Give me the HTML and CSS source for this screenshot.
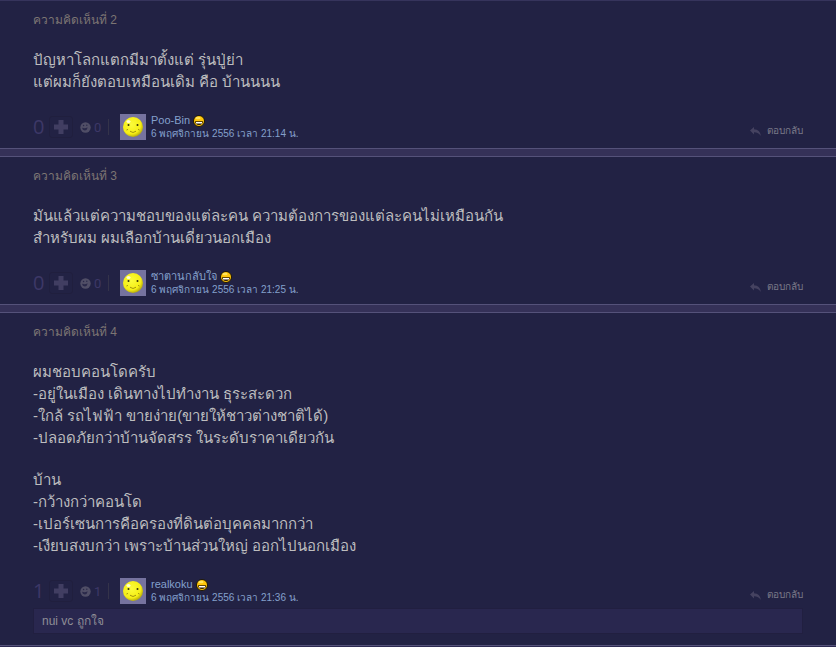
FILE: index.html
```html
<!DOCTYPE html>
<html lang="th">
<head>
    <meta charset="UTF-8">
    <meta name="viewport" content="width=device-width, initial-scale=1.0">
    <title>ความคิดเห็น</title>
    <link rel="stylesheet" href="styles.css">
</head>
<body>

    <!-- Comment list -->
    <main class="comments">
        <article class="comment">
            <h2 class="comment-no">ความคิดเห็นที่ 2</h2>
            <div class="comment-body">
                <p>ปัญหาโลกแตกมีมาตั้งแต่ รุ่นปู่ย่า<br>แต่ผมก็ยังตอบเหมือนเดิม คือ บ้านนนน</p>
            </div>
            <footer class="comment-footer">
                <span class="score">0</span>
                <button class="vote" type="button" aria-label="ถูกใจ"><svg><use href="#icon-plus"/></svg></button>
                <button class="emotion" type="button"><svg><use href="#icon-emotion"/></svg>0</button>
                <a class="avatar" href="#" aria-label="Poo-Bin"><svg><use href="#icon-face"/></svg></a>
                <div class="author">
                    <a class="name" href="#">Poo-Bin <svg><use href="#icon-grin"/></svg></a>
                    <time datetime="2013-11-06T21:14">6 พฤศจิกายน 2556 เวลา 21:14 น.</time>
                </div>
                <a class="reply" href="#"><svg><use href="#icon-reply"/></svg>ตอบกลับ</a>
            </footer>
        </article>

        <article class="comment">
            <h2 class="comment-no">ความคิดเห็นที่ 3</h2>
            <div class="comment-body">
                <p>มันแล้วแต่ความชอบของแต่ละคน ความต้องการของแต่ละคนไม่เหมือนกัน<br>สำหรับผม ผมเลือกบ้านเดี่ยวนอกเมือง</p>
            </div>
            <footer class="comment-footer">
                <span class="score">0</span>
                <button class="vote" type="button" aria-label="ถูกใจ"><svg><use href="#icon-plus"/></svg></button>
                <button class="emotion" type="button"><svg><use href="#icon-emotion"/></svg>0</button>
                <a class="avatar" href="#" aria-label="ซาตานกลับใจ"><svg><use href="#icon-face"/></svg></a>
                <div class="author">
                    <a class="name" href="#">ซาตานกลับใจ <svg><use href="#icon-grin"/></svg></a>
                    <time datetime="2013-11-06T21:25">6 พฤศจิกายน 2556 เวลา 21:25 น.</time>
                </div>
                <a class="reply" href="#"><svg><use href="#icon-reply"/></svg>ตอบกลับ</a>
            </footer>
        </article>

        <article class="comment">
            <h2 class="comment-no">ความคิดเห็นที่ 4</h2>
            <div class="comment-body">
                <p>ผมชอบคอนโดครับ<br>-อยู่ในเมือง เดินทางไปทำงาน ธุระสะดวก<br>-ใกล้ รถไฟฟ้า ขายง่าย(ขายให้ชาวต่างชาติได้)<br>-ปลอดภัยกว่าบ้านจัดสรร ในระดับราคาเดียวกัน</p>
                <p>บ้าน<br>-กว้างกว่าคอนโด<br>-เปอร์เซนการคือครองที่ดินต่อบุคคลมากกว่า<br>-เงียบสงบกว่า เพราะบ้านส่วนใหญ่ ออกไปนอกเมือง</p>
            </div>
            <footer class="comment-footer">
                <span class="score">1</span>
                <button class="vote" type="button" aria-label="ถูกใจ"><svg><use href="#icon-plus"/></svg></button>
                <button class="emotion" type="button"><svg><use href="#icon-emotion"/></svg>1</button>
                <a class="avatar" href="#" aria-label="realkoku"><svg><use href="#icon-face"/></svg></a>
                <div class="author">
                    <a class="name" href="#">realkoku <svg><use href="#icon-grin"/></svg></a>
                    <time datetime="2013-11-06T21:36">6 พฤศจิกายน 2556 เวลา 21:36 น.</time>
                </div>
                <a class="reply" href="#"><svg><use href="#icon-reply"/></svg>ตอบกลับ</a>
            </footer>
            <p class="likes">nui vc ถูกใจ</p>
        </article>
    </main>

    <!-- Shared icons -->
    <svg class="sprite" aria-hidden="true">
        <defs>
            <radialGradient id="face-fill" cx="0.42" cy="0.38" r="0.62">
                <stop offset="0" stop-color="#fbfb3c"/>
                <stop offset="0.75" stop-color="#f5ee14"/>
                <stop offset="1" stop-color="#b9ae0c"/>
            </radialGradient>
        </defs>
        <symbol id="icon-face" viewBox="0 0 26 26">
            <circle cx="13" cy="13" r="10" fill="url(#face-fill)"/>
            <ellipse cx="8.5" cy="7.5" rx="2" ry="1.6" fill="#ffffff" opacity="0.8"/>
            <circle cx="8.5" cy="11" r="1" fill="#33300a"/>
            <circle cx="17.5" cy="11" r="1" fill="#33300a"/>
            <path d="M6.5 16l1.5-.6M19.5 16l-1.5-.6M10 17.200q3 2.600 6 0" fill="none" stroke="#9b8a10" stroke-width="0.9"/>
        </symbol>
        <symbol id="icon-grin" viewBox="0 0 12 12">
            <circle cx="6" cy="6" r="5.500" fill="#ffc60a" stroke="#1a1408" stroke-width="1"/>
            <ellipse cx="5" cy="3" rx="2.600" ry="1.300" fill="#ffe45c"/>
            <path d="M2 6.200h8q-.4 3.800-4 3.800t-4-3.800z" fill="#2c1c05"/>
            <path d="M3 7h6v1.500h-6z" fill="#ffffff"/>
        </symbol>
        <symbol id="icon-plus" viewBox="0 0 14 14">
            <path d="M4.500 0h5v4.500h4.500v5h-4.500v4.500h-5v-4.500h-4.500v-5h4.500z" fill="currentColor"/>
        </symbol>
        <symbol id="icon-emotion" viewBox="0 0 11 11">
            <circle cx="5.500" cy="5.500" r="5.200" fill="currentColor"/>
            <path d="M2 5.800q3.200 1.200 5.500-.6q-.3 3.200-2.700 3.200t-2.800-2.600z" fill="#2a294a"/>
            <circle cx="3.600" cy="3.500" r="0.700" fill="#2a294a"/>
            <circle cx="6.800" cy="3.200" r="0.700" fill="#2a294a"/>
        </symbol>
        <symbol id="icon-reply" viewBox="0 0 11 9">
            <path d="M0 3.500l4-3.500v2.200q6 .3 7 6.800q-2.400-3.800-7-3.800v2.200z" fill="currentColor"/>
        </symbol>
    </svg>

</body>
</html>
```

FILE: styles.css
```css
body {
    margin: 0;
    background-color: #2d2a52;
    color: #bdbdbf;
    font-family: "Liberation Sans", Arial, sans-serif;
}

.sprite {
    display: block;
    width: 0;
    height: 0;
}

/* Comment list */
.comments {
    display: flex;
    flex-direction: column;
    gap: 7px;
    background-color: #353158;
}

.comment {
    padding: 9px 33px 8px;
    background-color: #222244;
    border-top: 1px solid #55527a;
    border-bottom: 1px solid #55527a;
}

.comment:first-child {
    border-top-color: #36345c;
}

.comment-no {
    margin: 0 0 19px;
    color: #7c7573;
    font-size: 12px;
    font-weight: normal;
    line-height: 20px;
}

.comment-body {
    margin-bottom: 21px;
    font-size: 15px;
    line-height: 22px;
}

.comment-body p {
    margin: 0;
}

.comment-body p + p {
    margin-top: 20px;
}

/* Footer row: votes, author, reply */
.comment-footer {
    display: flex;
    align-items: center;
    height: 26px;
}

.score {
    width: 16px;
    color: #3d3867;
    font-family: "Open Sans", sans-serif;
    font-size: 20px;
    line-height: 26px;
}

.vote,
.emotion {
    display: flex;
    align-items: center;
    justify-content: center;
    padding: 0;
    border: 0;
    background: none;
    font: inherit;
    cursor: pointer;
}

.vote {
    box-sizing: border-box;
    width: 24px;
    height: 22px;
    border: 1px solid #201f3e;
    border-radius: 3px;
    color: #413e62;
}

.vote svg {
    width: 14px;
    height: 14px;
}

.emotion {
    box-sizing: border-box;
    justify-content: flex-start;
    gap: 3px;
    width: 29px;
    height: 16px;
    margin-left: 7px;
    border-right: 1px solid #34334a;
    color: #3d3867;
    font-family: Roboto, sans-serif;
    font-size: 13px;
}

.emotion svg {
    width: 11px;
    height: 11px;
    color: #504e66;
}

.avatar {
    width: 26px;
    height: 26px;
    margin-left: 11px;
    background-color: #76739f;
}

.avatar svg {
    display: block;
    width: 26px;
    height: 26px;
}

.author {
    display: flex;
    flex-direction: column;
    margin-left: 5px;
    color: #84a0cc;
    font-size: 10px;
    line-height: 13px;
}

.name {
    display: flex;
    align-items: center;
    gap: 3px;
    color: #84a0cc;
    font-size: 11px;
    text-decoration: none;
}

.name svg {
    width: 12px;
    height: 12px;
}

.reply {
    display: flex;
    align-items: center;
    align-self: flex-end;
    gap: 6px;
    margin-left: auto;
    color: #7a7988;
    font-size: 10px;
    line-height: 18px;
    text-decoration: none;
}

.reply svg {
    width: 11px;
    height: 9px;
    color: #454260;
}

/* Who liked the comment */
.likes {
    margin: 4px 0 3px;
    padding: 3px 8px;
    border: 1px solid #211f40;
    background-color: #29274f;
    color: #8e8d96;
    font-size: 12px;
    line-height: 18px;
}
```
